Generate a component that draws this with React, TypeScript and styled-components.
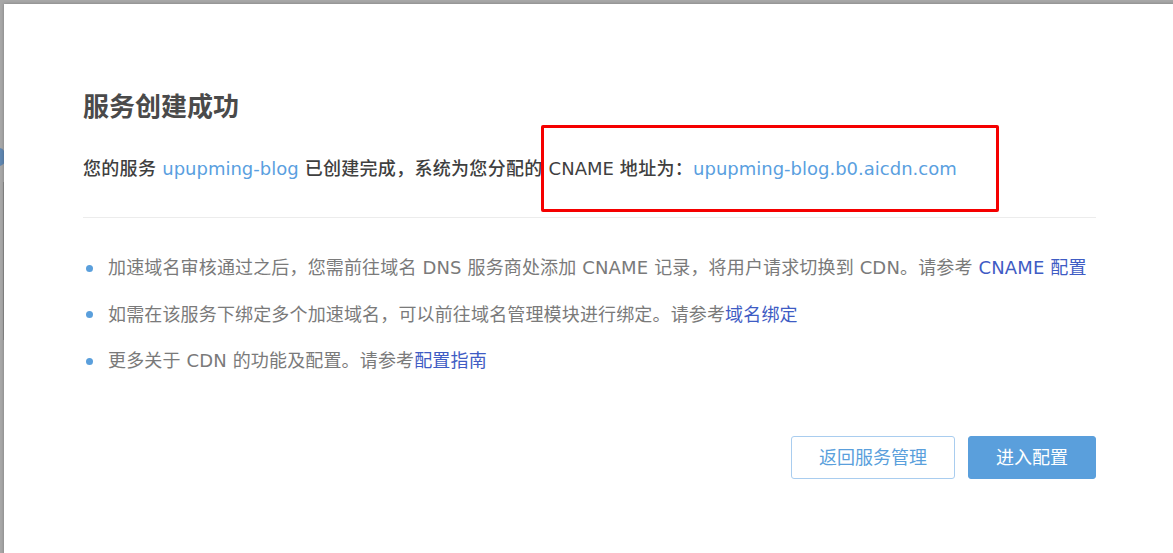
import React from "react";
import styled, { createGlobalStyle } from "styled-components";

const Global = createGlobalStyle`
  html, body { margin: 0; padding: 0; }
  body {
    background: #a7a7a7;
    overflow: hidden;
    font-family: "DejaVu Sans", "Noto Sans CJK SC", sans-serif;
  }
`;

const Page = styled.div`
  position: relative;
  width: 1173px;
  height: 553px;
  overflow: hidden;
  background: #a7a7a7;
`;

const BackdropDot = styled.div`
  position: absolute;
  left: -8px;
  top: 148px;
  width: 14px;
  height: 18px;
  border-radius: 50%;
  background: #5f86b0;
`;

const BackdropLine = styled.div`
  position: absolute;
  left: 3px;
  top: 182px;
  width: 1px;
  height: 158px;
  background: #8a8a8a;
`;

const Modal = styled.div`
  position: relative;
  margin: 4px 0 0 4px;
  width: 1320px;
  height: 600px;
  background: #ffffff;
  box-shadow: 0 0 3px rgba(0, 0, 0, 0.25);
  padding: 85px 0 0 79px;
  box-sizing: border-box;
`;

const Content = styled.div`
  width: 1013px;
  display: flex;
  flex-direction: column;
`;

const Title = styled.h2`
  margin: 0;
  font-size: 26px;
  line-height: 36px;
  font-weight: 700;
  color: #4a4a4a;
`;

const Summary = styled.p`
  margin: 30px 0 0;
  font-size: 18px;
  line-height: 28px;
  font-weight: 500;
  letter-spacing: 0.3px;
  color: #3f3f3f;
  white-space: nowrap;
`;

const Highlight = styled.span`
  color: #5a9fdf;
  font-weight: 400;
  letter-spacing: 0;
`;

const Latin = styled.span`
  font-weight: 400;
  letter-spacing: 0;
`;

const Divider = styled.hr`
  margin: 34px 0 0;
  border: 0;
  height: 1px;
  background: #ececec;
`;

const Tips = styled.ul`
  list-style: none;
  margin: 36px 0 0;
  padding: 0;
  display: flex;
  flex-direction: column;
  gap: 18.5px;
`;

const Tip = styled.li`
  display: flex;
  align-items: center;
  font-size: 18px;
  line-height: 28px;
  letter-spacing: 0.15px;
  color: #7a7a7a;
  white-space: nowrap;
  &::before {
    content: "";
    width: 7px;
    height: 7px;
    border-radius: 50%;
    background: #5a9fdc;
    margin: 0 15px 0 3px;
    flex: none;
  }
`;

const DocLink = styled.a`
  color: #3f5cc4;
  text-decoration: none;
`;

const Actions = styled.div`
  margin-top: 61px;
  display: flex;
  justify-content: flex-end;
  gap: 13px;
`;

const Button = styled.button<{ $primary?: boolean }>`
  height: 43px;
  width: ${(p) => (p.$primary ? "128px" : "164px")};
  border-radius: 3px;
  border: 1px solid ${(p) => (p.$primary ? "#5a9fdc" : "#a9cdef")};
  background: ${(p) => (p.$primary ? "#5a9fdc" : "#ffffff")};
  color: ${(p) => (p.$primary ? "#ffffff" : "#5a9fdc")};
  font-family: "Noto Sans CJK SC", sans-serif;
  font-size: 18px;
  line-height: 1;
  display: flex;
  align-items: center;
  justify-content: center;
  padding: 0 0 4px;
  box-sizing: border-box;
  cursor: pointer;
`;

const Annotation = styled.div`
  position: absolute;
  left: 537px;
  top: 121px;
  width: 458px;
  height: 87px;
  border: 3px solid #f50000;
  border-radius: 2px;
  box-sizing: border-box;
  pointer-events: none;
`;

export default function App() {
  return (
    <>
      <Global />
      <Page>
        <BackdropDot />
        <BackdropLine />
        <Modal>
          <Content>
            <Title>服务创建成功</Title>
            <Summary>
              您的服务 <Highlight>upupming-blog</Highlight> 已创建完成，系统为您分配的{" "}
              <Latin>CNAME</Latin> 地址为：<Highlight>upupming-blog.b0.aicdn.com</Highlight>
            </Summary>
            <Divider />
            <Tips>
              <Tip>
                加速域名审核通过之后，您需前往域名 DNS 服务商处添加 CNAME 记录，将用户请求切换到 CDN。请参考&nbsp;
                <DocLink href="#">CNAME 配置</DocLink>
              </Tip>
              <Tip>
                如需在该服务下绑定多个加速域名，可以前往域名管理模块进行绑定。请参考
                <DocLink href="#">域名绑定</DocLink>
              </Tip>
              <Tip>
                更多关于 CDN 的功能及配置。请参考<DocLink href="#">配置指南</DocLink>
              </Tip>
            </Tips>
            <Actions>
              <Button>返回服务管理</Button>
              <Button $primary>进入配置</Button>
            </Actions>
          </Content>
          <Annotation />
        </Modal>
      </Page>
    </>
  );
}
